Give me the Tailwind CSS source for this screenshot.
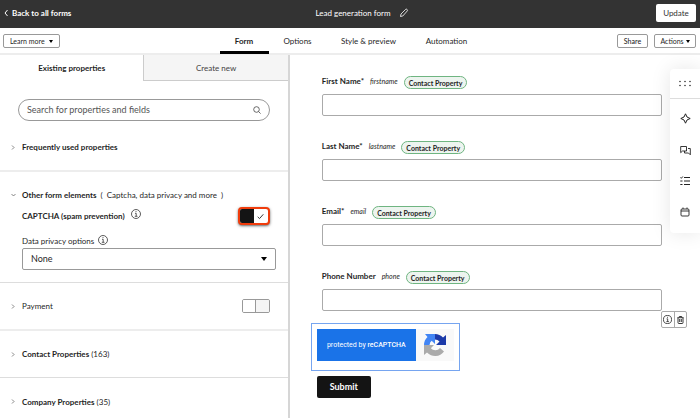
<!DOCTYPE html>
<html lang="en">
<head>
  <meta charset="UTF-8">
  <meta name="viewport" content="width=device-width, initial-scale=1.0">
  <title>Lead generation form</title>
  <script src="https://cdn.jsdelivr.net/npm/@tailwindcss/browser@4"></script>
</head>
<body class="flex h-screen flex-col overflow-hidden bg-white font-[Lato,'Liberation_Sans',sans-serif] text-[8px] leading-3 text-[#1f1f1f]">
  <!-- Header -->
  <header class="grid h-7 shrink-0 grid-cols-[1fr_auto_1fr] items-center bg-[#333] px-1 pb-[2px] text-white">
    <a href="#" class="flex items-center gap-1 font-bold">
      <svg class="h-2 w-1" viewBox="0 0 4 8" fill="none" stroke="currentColor"><path d="M3.5 1 1 4l2.500 3"/></svg>
      Back to all forms
    </a>
    <div class="flex items-center gap-2 pl-6">
      <h1>Lead generation form</h1>
      <button type="button" aria-label="Rename">
        <svg class="size-[10px]" viewBox="0 0 10 10" fill="none" stroke="currentColor" stroke-width=".8" stroke-linejoin="round"><path d="m1.500 8.500.5-2.500 4.700-4.700q.7-.5 1.400.2t.2 1.400L3.800 8z"/></svg>
      </button>
    </div>
    <button type="button" class="h-[18px] w-10 justify-self-end rounded-xs bg-white text-[#333]">Update</button>
  </header>

  <!-- Sub navigation -->
  <div class="grid h-[27px] shrink-0 grid-cols-[1fr_auto_1fr] border-b-2 border-[#ededed] px-1">
    <div class="pt-[6px]">
      <button type="button" class="-ml-px flex h-[14px] w-[57px] items-center justify-between rounded-xs border border-[#999] px-[6px] text-[7px] whitespace-nowrap">
        Learn more
        <svg class="h-[3px] w-1" viewBox="0 0 4 3"><path d="M0 0h4L2 3z"/></svg>
      </button>
    </div>
    <nav class="flex gap-[6px] pr-1">
      <a href="#" class="-mb-px flex w-[49px] items-center justify-center border-b-3 border-black pt-[2px] font-bold">Form</a>
      <a href="#" class="flex w-[46px] items-center justify-center">Options</a>
      <a href="#" class="flex w-[84px] items-center justify-center">Style &amp; preview</a>
      <a href="#" class="flex w-[60px] items-center justify-center">Automation</a>
    </nav>
    <div class="flex justify-end gap-[6px] pt-[6px] text-[7px]">
      <button type="button" class="h-[14px] w-[31px] rounded-xs border border-[#999] font-medium">Share</button>
      <button type="button" class="flex h-[14px] w-[42px] items-center justify-center gap-[2px] rounded-xs border border-[#999]">
        Actions
        <svg class="h-[3px] w-1" viewBox="0 0 4 3"><path d="M0 0h4L2 3z"/></svg>
      </button>
    </div>
  </div>

  <div class="flex min-h-0 flex-1">
    <!-- Property sidebar -->
    <aside class="w-[41.4%] shrink-0 overflow-hidden border-r-2 border-[#d6d6d6]">
      <div class="flex h-[26px]">
        <button type="button" class="flex-1 font-bold">Existing properties</button>
        <button type="button" class="flex-1 border-b border-l border-[#ccc] bg-[#f5f5f5] text-[#444]">Create new</button>
      </div>

      <label class="mx-[18px] mt-[18px] flex h-[22px] items-center rounded-full border border-[#999] px-2">
        <input type="search" aria-label="Search properties" placeholder="Search for properties and fields" class="min-w-0 flex-1 text-[9px] outline-none placeholder:text-[#555]">
        <svg class="size-2" viewBox="0 0 8 8" fill="none" stroke="#444" stroke-width=".8"><circle cx="3.500" cy="3.500" r="2.800"/><path d="m5.600 5.600 2 2"/></svg>
      </label>

      <section class="mt-[18px] flex h-[33px] items-start border-b-2 border-[#ededed] pl-[11px]">
        <button type="button" class="flex items-center gap-[7px] py-[2px] font-bold">
          <svg class="h-[5px] w-1" viewBox="0 0 4 5" fill="none" stroke="#555" stroke-width=".7"><path d="m1 .5 2 2-2 2"/></svg>
          Frequently used properties
        </button>
      </section>

      <section class="h-[111px] border-b border-[#ddd] pt-[17px] pr-3">
        <button type="button" class="flex items-center gap-[6px] pl-[11px]">
          <svg class="h-1 w-[5px]" viewBox="0 0 5 4" fill="none" stroke="#555" stroke-width=".7"><path d="m.5 1 2 2 2-2"/></svg>
          <span><b>Other form elements</b>&nbsp; (&nbsp; Captcha, data privacy and more &nbsp;)</span>
        </button>
        <div class="mt-[5px] flex h-5 items-center justify-between pr-[6px] pl-[22px]">
          <div class="flex items-center gap-[6px]">
            <label for="captcha" class="font-bold">CAPTCHA (spam prevention)</label>
            <svg class="mb-1 size-[10px]" viewBox="0 0 10 10" fill="none" stroke="#333" stroke-width=".8"><circle cx="5" cy="5" r="4.500"/><path d="M4 4.300h1.200v2.900M3.800 7.300h2.700M4.500 2.600h1"/></svg>
          </div>
          <label class="flex h-[18px] w-8 overflow-hidden rounded-sm border-2 border-[#f03c0c] bg-white shadow-sm shadow-black/50">
            <input type="checkbox" id="captcha" class="sr-only" checked>
            <span class="w-[14px] bg-[#141414]"></span>
            <span class="flex flex-1 items-center justify-center">
              <svg class="size-[7px]" viewBox="0 0 7 7" fill="none" stroke="#222" stroke-width=".9"><path d="m.7 3.800 1.800 1.800 3.800-4.300"/></svg>
            </span>
          </label>
        </div>
        <div class="mt-[9px] flex items-center gap-1 pl-[22px]">
          <label for="privacy">Data privacy options</label>
          <svg class="mb-[2px] size-[10px]" viewBox="0 0 10 10" fill="none" stroke="#333" stroke-width=".8"><circle cx="5" cy="5" r="4.500"/><path d="M4 4.300h1.200v2.900M3.800 7.300h2.700M4.500 2.600h1"/></svg>
        </div>
        <div class="relative mt-px ml-[22px]">
          <select id="privacy" class="h-[22px] w-full appearance-none rounded-xs border border-[#999] bg-white px-2 text-[9px]">
            <option>None</option>
          </select>
          <svg class="pointer-events-none absolute top-[9px] right-[9px] h-1 w-[6px]" viewBox="0 0 6 4"><path d="M0 0h6L3 4z"/></svg>
        </div>
      </section>

      <section class="flex h-[48px] items-center justify-between border-b-2 border-[#ededed] pr-[18px] pl-[11px]">
        <button type="button" class="flex items-center gap-[7px]">
          <svg class="h-[5px] w-1" viewBox="0 0 4 5" fill="none" stroke="#555" stroke-width=".7"><path d="m1 .5 2 2-2 2"/></svg>
          Payment
        </button>
        <label class="flex h-[14px] w-7 overflow-hidden rounded-xs border border-[#999]">
          <input type="checkbox" aria-label="Payment" class="sr-only">
          <span class="flex-1 bg-white"></span>
          <span class="flex-1 border-l border-[#999] bg-[#f5f5f5]"></span>
        </label>
      </section>

      <section class="flex h-[47px] items-center border-b border-[#ddd] pl-[11px]">
        <button type="button" class="flex items-center gap-[7px]">
          <svg class="h-[5px] w-1" viewBox="0 0 4 5" fill="none" stroke="#555" stroke-width=".7"><path d="m1 .5 2 2-2 2"/></svg>
          <span><b>Contact Properties</b> (163)</span>
        </button>
      </section>

      <section class="flex h-[47px] items-center pl-[11px]">
        <button type="button" class="flex items-center gap-[7px]">
          <svg class="h-[5px] w-1" viewBox="0 0 4 5" fill="none" stroke="#555" stroke-width=".7"><path d="m1 .5 2 2-2 2"/></svg>
          <span><b>Company Properties</b> (35)</span>
        </button>
      </section>
    </aside>

    <!-- Form canvas -->
    <main class="relative min-w-0 flex-1 pt-[21px] pr-[38px] pl-[21px]">
      <form>
        <div class="space-y-[25px] pl-[11px]">
          <div>
            <div class="flex h-[13px] gap-[6px] leading-[10px]">
              <label for="firstname" class="font-bold">First Name*</label>
              <i class="text-[7px]">firstname</i>
              <span class="flex h-[13px] items-center rounded-full border border-[#6fb581] bg-[#edf4ef] px-1 text-[7px] font-bold">Contact Property</span>
            </div>
            <input type="text" id="firstname" class="mt-[5px] block h-[22px] w-full rounded-xs border border-[#aaa] bg-white px-2">
          </div>
          <div>
            <div class="flex h-[13px] gap-[6px] leading-[10px]">
              <label for="lastname" class="font-bold">Last Name*</label>
              <i class="text-[7px]">lastname</i>
              <span class="flex h-[13px] items-center rounded-full border border-[#6fb581] bg-[#edf4ef] px-1 text-[7px] font-bold">Contact Property</span>
            </div>
            <input type="text" id="lastname" class="mt-[5px] block h-[22px] w-full rounded-xs border border-[#aaa] bg-white px-2">
          </div>
          <div>
            <div class="flex h-[13px] gap-[6px] leading-[10px]">
              <label for="email" class="font-bold">Email*</label>
              <i class="text-[7px]">email</i>
              <span class="flex h-[13px] items-center rounded-full border border-[#6fb581] bg-[#edf4ef] px-1 text-[7px] font-bold">Contact Property</span>
            </div>
            <input type="email" id="email" class="mt-[5px] block h-[22px] w-full rounded-xs border border-[#aaa] bg-white px-2">
          </div>
          <div class="relative">
            <div class="flex h-[13px] gap-[6px] leading-[10px]">
              <label for="phone" class="font-bold">Phone Number</label>
              <i class="text-[7px]">phone</i>
              <span class="flex h-[13px] items-center rounded-full border border-[#6fb581] bg-[#edf4ef] px-1 text-[7px] font-bold">Contact Property</span>
            </div>
            <input type="tel" id="phone" class="mt-[5px] block h-[22px] w-full rounded-xs border border-[#aaa] bg-white px-2">
            <!-- Field actions -->
            <div class="absolute top-full left-full -ml-px flex h-[17px] w-[26px] divide-x divide-[#aaa] rounded-xs border border-[#aaa] bg-white">
              <button type="button" aria-label="Info" class="flex flex-1 items-center justify-center">
                <svg class="size-[9px]" viewBox="0 0 10 10" fill="none" stroke="#222" stroke-width=".9"><circle cx="5" cy="5" r="4.500"/><path d="M4 4.300h1.200v2.900M3.800 7.300h2.700M4.500 2.600h1"/></svg>
              </button>
              <button type="button" aria-label="Delete" class="flex flex-1 items-center justify-center">
                <svg class="h-2 w-[7px]" viewBox="0 0 7 8" fill="none" stroke="#222" stroke-width=".9"><path d="M.3 1.700h6.400M2.300 1.500V.5h2.400v1M1 2v4.700q0 .8.8.8h3.400q.8 0 .8-.8V2M2.700 3v3M4.300 3v3"/></svg>
              </button>
            </div>
          </div>
        </div>

        <!-- reCAPTCHA -->
        <div class="mt-3 flex h-12 w-[149px] border border-[#76a5f0] px-[5px] pt-[5px]">
          <div class="flex h-8 w-[99px] items-center justify-center bg-[#1a73e8] font-[Roboto,sans-serif] text-[7px] text-white">
            <span>protected by <b class="font-medium">reCAPTCHA</b></span>
          </div>
          <div class="flex h-8 flex-1 items-center justify-center bg-[#f9f9f9]">
            <svg class="size-6" viewBox="0 0 24 24">
              <path fill="#1c3aa9" d="M12 1a11 11 0 0 1 8 3.500L23 2v10H13l3.500-3.500A6 6 0 0 0 12 6.500z"/>
              <path fill="#4285f4" d="M12 1v10L8.700 7.800A6 6 0 0 0 6.500 12H1a11 11 0 0 1 3.500-8L2 1z"/>
              <path fill="#ababab" d="M1 12h10l-3.200 3.300a6 6 0 0 0 9.200-.3l4 3.500a11 11 0 0 1-17 1L1 22z"/>
            </svg>
          </div>
        </div>
        <button type="submit" class="mt-[5px] ml-[6px] h-[22px] w-[54px] rounded-xs bg-[#141414] text-[9px] font-bold text-white">Submit</button>
      </form>

      <!-- Floating tool rail -->
      <div class="absolute top-[14px] right-0 flex h-[164px] w-[30px] flex-col rounded-l-sm bg-white shadow-[0_0_20px_rgba(0,0,0,0.10)]">
        <button type="button" aria-label="Drag" class="flex h-[30px] items-center justify-center border-b border-[#ddd]">
          <svg class="h-[7px] w-3" viewBox="0 0 12 7" fill="#333"><circle cx="1" cy="1.500" r=".8"/><circle cx="6" cy="1.500" r=".8"/><circle cx="11" cy="1.500" r=".8"/><circle cx="1" cy="5.500" r=".8"/><circle cx="6" cy="5.500" r=".8"/><circle cx="11" cy="5.500" r=".8"/></svg>
        </button>
        <div class="flex flex-1 flex-col justify-around pt-1 pb-[6px]">
          <button type="button" aria-label="AI assistant" class="flex justify-center">
            <svg class="size-[11px]" viewBox="0 0 11 11" fill="none" stroke="#222" stroke-linejoin="round"><path d="M5.500.8 7 4l3.200 1.500L7 7l-1.500 3.200L4 7 .8 5.500 4 4z"/></svg>
          </button>
          <button type="button" aria-label="Comments" class="flex justify-center">
            <svg class="size-[11px]" viewBox="0 0 11 11" fill="none" stroke="#222" stroke-width=".9" stroke-linejoin="round"><path d="M.7 1.500h5.800v4.500H2.500L.7 7.700zM8 3.500h2.300v6.300L8.500 8H4.500V6"/></svg>
          </button>
          <button type="button" aria-label="Tasks" class="flex justify-center">
            <svg class="size-[10px]" viewBox="0 0 10 10" fill="none" stroke="#222"><path d="M4 1.500h6M4 5h6M4 8.500h6M.5 1.500 1.300 2.300 2.800.5M.3 5h2.200M.3 8.500h2.200"/></svg>
          </button>
          <button type="button" aria-label="Calendar" class="flex justify-center">
            <svg class="size-[10px]" viewBox="0 0 10 10" fill="none" stroke="#222" stroke-width=".9"><rect x="1" y="2" width="8" height="7" rx="1"/><path d="M1 4h8M3 .5V2M7 .5V2"/></svg>
          </button>
        </div>
      </div>
    </main>
  </div>
</body>
</html>
